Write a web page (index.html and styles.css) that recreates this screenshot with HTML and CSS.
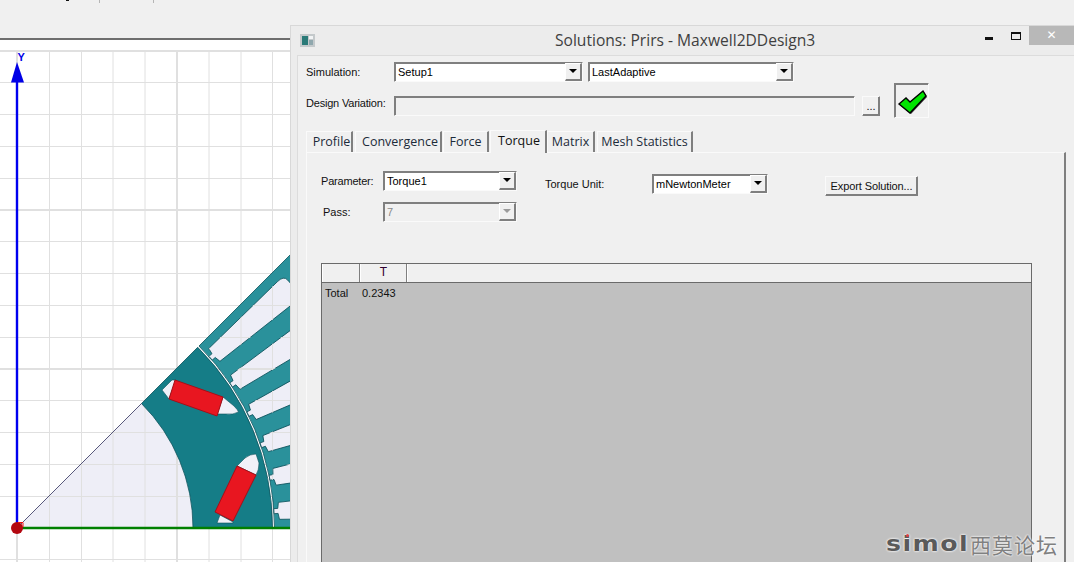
FILE: index.html
```html
<!DOCTYPE html>
<html lang="en">
<head>
<meta charset="utf-8">
<title>Solutions: Prirs - Maxwell2DDesign3</title>
<link rel="stylesheet" href="styles.css">
</head>
<body>
<div class="desktop">
  <div class="toolbar"><span class="tb-mark"></span><span class="tb-sep tb-sep-a"></span><span class="tb-sep tb-sep-b"></span></div>
  <svg class="canvas" width="290" height="522" viewBox="0 40 290 522" xmlns="http://www.w3.org/2000/svg">
    <defs>
      <g id="grid">
        <path class="gl" d="M49.5 50V562M81.5 50V562M113 50V562M145 50V562M209 50V562M241 50V562M272.5 50V562M0 82.5H290M0 114.5H290M0 146.5H290M0 178.5H290M0 241.5H290M0 273.5H290M0 305.5H290M0 337.5H290M0 400.5H290M0 432.5H290M0 464.5H290M0 496.5H290M0 559.5H290"/>
        <path class="gl gl-thick" d="M17 50V562M177 50V562M0 51H290M0 210H290M0 369H290"/>
      </g>
      <path id="slot" d="M257.5-2.5H261.5L262.5-8.5L358-13.5Q367-14 367-8V8Q367 14 358 13.5L262.5 8.5L261.5 2.5H257.5Z"/>
      <path id="sector" d="M17 528L141.5 403.5A176 176 0 0 1 193 528Z"/>
      <clipPath id="lightAreas">
        <use href="#sector"/>
        <use href="#slot" transform="translate(17 528) rotate(-41.25)"/>
        <use href="#slot" transform="translate(17 528) rotate(-33.75)"/>
        <use href="#slot" transform="translate(17 528) rotate(-26.25)"/>
        <use href="#slot" transform="translate(17 528) rotate(-18.75)"/>
        <use href="#slot" transform="translate(17 528) rotate(-11.25)"/>
        <use href="#slot" transform="translate(17 528) rotate(-3.75)"/>
      </clipPath>
    </defs>
    <use href="#grid"/>
    <use href="#sector" class="light"/>
    <path class="stator" d="M199 346L299.8 245.2L417 528H274.5A257.5 257.5 0 0 0 199 346Z"/>
    <g class="light-slots">
      <use href="#slot" transform="translate(17 528) rotate(-41.25)"/>
      <use href="#slot" transform="translate(17 528) rotate(-33.75)"/>
      <use href="#slot" transform="translate(17 528) rotate(-26.25)"/>
      <use href="#slot" transform="translate(17 528) rotate(-18.75)"/>
      <use href="#slot" transform="translate(17 528) rotate(-11.25)"/>
      <use href="#slot" transform="translate(17 528) rotate(-3.75)"/>
    </g>
    <g clip-path="url(#lightAreas)" class="grid-dim"><use href="#grid"/></g>
    <path class="rotor" d="M141.5 403.5L197.7 347.3A255.5 255.5 0 0 1 272.5 528H193A176 176 0 0 0 141.5 403.5Z"/>
    <path class="pocket" d="M162 390L172 380H176L169 399Z"/>
    <path class="pocket" d="M223 397L234 406Q238 410 238.5 412Q233 415 226 414L217 414Z"/>
    <path class="pocket" d="M245 458Q250 454 256 454L259 463Q259 470 256 475L237 466Z"/>
    <path class="pocket" d="M217 523L220 515L233 522L233 523Z"/>
    <path class="magnet" d="M175 380L223 397L217 416L169 399Z"/>
    <path class="magnet" d="M237 466L256 475L233 521L215 512Z"/>
    <path class="diag" d="M17 528L141.5 403.5"/>
    <path class="axis-y" d="M17 528V82"/>
    <path class="arrow" d="M17 62L24 82.5H11Z"/>
    <text class="axis-label" x="17.5" y="61">Y</text>
    <path class="axis-x" d="M17 528H290"/>
    <circle class="origin" cx="17" cy="528" r="6"/>
    <path class="origin-mark" d="M18 522.5H23V527"/>
  </svg>

  <section class="window">
    <header class="titlebar">
      <svg class="app-icon" width="15" height="13" viewBox="0 0 15 13" xmlns="http://www.w3.org/2000/svg">
        <rect class="ai-frame" width="15" height="13"/>
        <rect class="ai-a" x="2" y="2" width="6" height="9"/>
        <rect class="ai-b" x="9" y="2" width="4" height="3"/>
        <rect class="ai-c" x="9" y="6" width="4" height="5"/>
      </svg>
      <h1 class="win-title">Solutions: Prirs - Maxwell2DDesign3</h1>
      <div class="win-buttons">
        <span class="wb wb-min"></span>
        <span class="wb wb-max"></span>
        <span class="wb wb-close">✕</span>
      </div>
    </header>

    <div class="client">
      <div class="row row-sim">
        <span class="label label-sim">Simulation:</span>
        <div class="select sel-setup"><span class="sel-text">Setup1</span><span class="sel-btn"></span></div>
        <div class="select sel-adaptive"><span class="sel-text">LastAdaptive</span><span class="sel-btn"></span></div>
      </div>
      <div class="row row-var">
        <span class="label label-var">Design Variation:</span>
        <div class="field"></div>
        <button class="btn btn-dots">...</button>
        <div class="status">
          <svg width="32" height="32" viewBox="0 0 32 32" xmlns="http://www.w3.org/2000/svg">
            <path class="check-shadow" d="M4 20L11 14L15 18L28 7L31 12L15 29Z"/>
            <path class="check" d="M3 19L10 13L14 17L27 6L30 11L14 28Z"/>
          </svg>
        </div>
      </div>

      <nav class="tabs">
        <span class="tab tab-profile">Profile</span>
        <span class="tab tab-conv">Convergence</span>
        <span class="tab tab-force">Force</span>
        <span class="tab tab-torque active">Torque</span>
        <span class="tab tab-matrix">Matrix</span>
        <span class="tab tab-mesh">Mesh Statistics</span>
      </nav>

      <div class="panel">
        <div class="controls">
          <div class="params">
            <div class="row param-row">
              <span class="label label-param">Parameter:</span>
              <div class="select sel-param"><span class="sel-text">Torque1</span><span class="sel-btn"></span></div>
            </div>
            <div class="row param-row pass-row">
              <span class="label label-pass">Pass:</span>
              <div class="select sel-param disabled"><span class="sel-text">7</span><span class="sel-btn"></span></div>
            </div>
          </div>
          <div class="row unit-row">
            <span class="label label-unit">Torque Unit:</span>
            <div class="select sel-unit"><span class="sel-text">mNewtonMeter</span><span class="sel-btn"></span></div>
          </div>
          <button class="btn btn-export">Export Solution...</button>
        </div>

        <div class="table">
          <div class="thead">
            <span class="th th-a"></span>
            <span class="th th-b">T</span>
            <span class="th th-c"></span>
          </div>
          <div class="tbody">
            <span class="td td-a">Total</span>
            <span class="td td-b">0.2343</span>
          </div>
        </div>
      </div>
    </div>
  </section>

  <div class="watermark"><span class="wm-latin">simol</span><span class="wm-cjk">西莫论坛</span><span class="wm-dot"></span></div>
</div>
</body>
</html>
```
FILE: styles.css
```css
* { box-sizing: border-box; }
html, body { margin: 0; padding: 0; }
body { font-family: "Liberation Sans", Arial, sans-serif; }

.desktop { position: relative; width: 1074px; height: 562px; overflow: hidden; background: #fff; }

/* left: toolbar + 2D modeller canvas */
.toolbar { position: relative; height: 40px; background: #f0f0f0; border-bottom: 2px solid #6e6e6e; }
.tb-mark { position: absolute; left: 66px; top: 0; width: 3px; height: 1px; background: #111; }
.tb-sep { position: absolute; top: 0; width: 1px; height: 3px; background: #b5b5b5; }
.tb-sep-a { left: 99px; }
.tb-sep-b { left: 153px; }

.canvas { display: block; }
.gl { fill: none; stroke: #e0e0e0; stroke-width: 1; }
.gl-thick { stroke-width: 2; }
.light { fill: #eeeef7; }
.light-slots { fill: #eeeef7; stroke: #0c525c; stroke-width: 0.8; }
.grid-dim .gl { stroke: #d6d6e0; }
.stator { fill: #2a919b; stroke: #0c525c; stroke-width: 0.8; }
.rotor { fill: #157d87; stroke: #0c525c; stroke-width: 0.8; }
.pocket { fill: #f1f1f8; stroke: #0c525c; stroke-width: 0.6; }
.magnet { fill: #e81620; stroke: #a50f18; stroke-width: 1; }
.diag { stroke: #30305a; stroke-width: 0.8; fill: none; }
.axis-y { stroke: #0000f0; stroke-width: 2.4; fill: none; }
.axis-x { stroke: #008000; stroke-width: 2.4; fill: none; }
.arrow { fill: #0000e6; }
.axis-label { font: bold 11px "Liberation Sans", Arial, sans-serif; fill: #0000e6; }
.origin { fill: #b30710; }
.origin-mark { fill: none; stroke: #f01010; stroke-width: 1; }

/* solutions window */
.window {
  position: absolute; left: 290px; top: 25px; width: 784px; height: 537px;
  background: #ececec; border-top: 1px solid #d8d8d8; border-left: 1px solid #d8d8d8;
  display: flex; flex-direction: column; overflow: hidden;
}
.titlebar { position: relative; flex: none; height: 29px; display: flex; align-items: flex-start; }
.app-icon { position: absolute; left: 9px; top: 8px; }
.ai-frame { fill: #c4c9cb; }
.ai-a { fill: #2a7a78; }
.ai-b { fill: #f2f4f5; }
.ai-c { fill: #8fa7ad; }
.win-title {
  margin: 3px 0 0 264px; font: 400 15.6px "Open Sans", sans-serif; color: #3f3f3f; white-space: nowrap;
}
.win-buttons { position: absolute; right: 0; top: 0; display: flex; align-items: flex-start; }
.wb { display: block; }
.wb-min { width: 8px; height: 3px; margin: 11px 18px 0 0; background: #111; }
.wb-max { width: 10px; height: 8px; margin: 6px 8px 0 0; border: 1px solid #111; border-top-width: 2px; }
.wb-close { width: 45px; height: 19px; background: #b8b8b8; color: #fff; font: 12px/19px "DejaVu Sans", sans-serif; text-align: center; }

.client {
  flex: 1; min-height: 0; margin-left: 6px; padding: 6px 0 0 8px;
  background: #f0f0f0; border-top: 1px solid #dcdcdc; border-left: 1px solid #dcdcdc;
  display: flex; flex-direction: column;
}
.row { display: flex; }
.label { font-size: 11px; line-height: 14px; color: #111; white-space: nowrap; }

.select {
  display: flex; height: 20px; background: #fff; flex: none;
  border: 1px solid; border-color: #7f7f7f #fafafa #fafafa #7f7f7f;
  box-shadow: inset 1px 1px 0 #7f7f7f;
}
.sel-text { flex: 1; padding: 2px 0 0 3px; font-size: 11px; line-height: 14px; color: #000; }
.sel-btn {
  position: relative; flex: none; width: 17px; height: 18px; margin-top: 0;
  background: #f0f0f0; border-right: 2px solid #7f7f7f; border-bottom: 2px solid #7f7f7f;
  border-left: 1px solid #fff; border-top: 1px solid #fff;
}
.sel-btn::after {
  content: ""; position: absolute; left: 3px; top: 5px;
  border-left: 4px solid transparent; border-right: 4px solid transparent; border-top: 4px solid #000;
}
.select.disabled { background: #f0f0f0; }
.disabled .sel-text { color: #8a8a8a; }
.disabled .sel-btn::after { border-top-color: #9a9a9a; }

.row-sim { height: 20px; }
.label-sim { width: 88px; padding-top: 3px; }
.sel-setup { width: 189px; }
.sel-adaptive { width: 206px; margin-left: 5px; }

.row-var { height: 35px; margin-top: 1px; }
.label-var { width: 88px; padding-top: 13px; letter-spacing: -0.2px; }
.field {
  width: 461px; height: 20px; margin-top: 13px; background: #f0f0f0;
  border: 1px solid; border-color: #7f7f7f #fafafa #fafafa #7f7f7f; box-shadow: inset 1px 1px 0 #7f7f7f;
}
.btn {
  display: block; padding: 0; background: #f0f0f0; color: #111; font: 11px "Liberation Sans", Arial, sans-serif; white-space: nowrap;
  border: 1px solid; border-color: #fafafa #7f7f7f #7f7f7f #fafafa; box-shadow: inset -1px -1px 0 #7f7f7f;
}
.btn-dots { width: 18px; height: 20px; margin: 13px 0 0 7px; line-height: 14px; }
.status {
  width: 35px; height: 35px; margin-left: 14px; padding: 1px;
  border: 1px solid; border-color: #7f7f7f #fafafa #fafafa #7f7f7f; box-shadow: inset 1px 1px 0 #7f7f7f;
}
.status svg { display: block; }
.check { fill: #00e400; stroke: #000; stroke-width: 1.4; }
.check-shadow { fill: #000; opacity: .75; }

.tabs { display: flex; align-items: flex-end; height: 23px; margin-top: 11px; font: 12.5px "Open Sans", sans-serif; color: #1c2b3a; }
.tab {
  display: block; height: 21px; line-height: 20px; text-align: center; white-space: nowrap;
  border-top: 1px solid #fafafa; border-left: 1px solid #fafafa; border-right: 2px solid #7f7f7f; flex: none;
}
.tab-profile { width: 47px; padding-left: 5px; }
.tab-conv { width: 87px; margin-left: 2px; padding-left: 4px; }
.tab-force { width: 46px; margin-left: 1px; }
.tab-torque { width: 57px; margin-left: 1px; padding-left: 2px; }
.tab-matrix { width: 48px; }
.tab-mesh { width: 96px; margin-left: 2px; }
.tab.active { height: 23px; line-height: 19px; color: #111; position: relative; top: 1px; background: #f0f0f0; z-index: 1; }

.panel {
  flex: 1; min-height: 0; width: 760px; padding: 18px 0 0 14px;
  border-top: 1px solid #fafafa; border-left: 1px solid #fafafa; border-right: 2px solid #7f7f7f;
}
.controls { display: flex; align-items: flex-start; height: 92px; }
.params { width: 224px; flex: none; }
.param-row { height: 20px; }
.pass-row { margin-top: 11px; }
.label-param { width: 62px; padding-top: 3px; letter-spacing: -0.2px; }
.label-pass { width: 62px; padding: 3px 0 0 2px; }
.sel-param { width: 134px; }
.unit-row { margin-top: 3px; width: 223px; flex: none; }
.label-unit { width: 107px; padding-top: 3px; }
.sel-unit { width: 116px; }
.btn-export { width: 93px; height: 20px; margin: 5px 0 0 57px; line-height: 14px; letter-spacing: -0.1px; }

.table { width: 711px; height: 320px; border-top: 1px solid #6a6a6a; border-left: 1px solid #6a6a6a; border-right: 1px solid #6a6a6a; }
.thead { display: flex; height: 19px; background: #f0f0f0; border-bottom: 1px solid #6a6a6a; }
.th { display: block; height: 18px; font-size: 12px; line-height: 17px; text-align: center; color: #300030; border-left: 1px solid #fff; border-right: 1px solid #7f7f7f; }
.th-a { width: 38px; }
.th-b { width: 47px; }
.th-c { flex: 1; border-right: 0; }
.tbody { display: flex; height: 300px; background: #c0c0c0; font-size: 11px; line-height: 14px; color: #111; padding: 3px 0 0 3px; }
.td-a { width: 37px; }

/* forum watermark */
.watermark { position: absolute; left: 886px; top: 532px; height: 24px; display: flex; align-items: center; color: #5a5a5a; text-shadow: 0 0 2px #fff, 0 0 2px #fff; white-space: nowrap; }
.wm-latin { width: 84px; font: bold 21px/24px "DejaVu Sans", sans-serif; letter-spacing: 1.2px; transform: scaleX(1.2); transform-origin: left center; }
.wm-cjk { font: 400 21px/24px "Noto Sans CJK SC", sans-serif; letter-spacing: 1px; color: #808080; }
.wm-dot { position: absolute; left: 20px; top: 2px; width: 3px; height: 3px; border-radius: 50%; background: #e04040; }
```
